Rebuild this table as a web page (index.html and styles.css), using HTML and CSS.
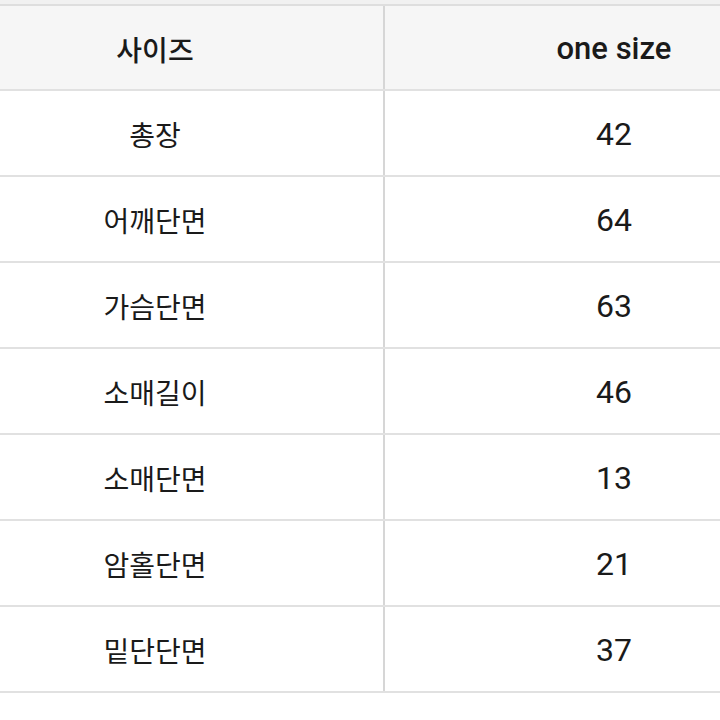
FILE: index.html
```html
<!DOCTYPE html>
<html lang="ko">
<head>
<meta charset="utf-8">
<link rel="stylesheet" href="styles.css">
</head>
<body>
<div class="page">
  <div class="strip"></div>
  <div class="table">
    <div class="row head"><div class="cell key">사이즈</div><div class="cell val">one size</div></div>
    <div class="row"><div class="cell key">총장</div><div class="cell val">42</div></div>
    <div class="row"><div class="cell key">어깨단면</div><div class="cell val">64</div></div>
    <div class="row"><div class="cell key">가슴단면</div><div class="cell val">63</div></div>
    <div class="row"><div class="cell key">소매길이</div><div class="cell val">46</div></div>
    <div class="row"><div class="cell key">소매단면</div><div class="cell val">13</div></div>
    <div class="row"><div class="cell key">암홀단면</div><div class="cell val">21</div></div>
    <div class="row"><div class="cell key">밑단단면</div><div class="cell val">37</div></div>
  </div>
</div>
</body>
</html>
```
FILE: styles.css
```css
html, body {
  margin: 0;
  padding: 0;
  background: #ffffff;
}
.page {
  width: 720px;
  height: 720px;
  overflow: hidden;
}
.strip {
  height: 4px;
  background: #f1f1f1;
}
.table {
  width: 916px;
  margin-left: -73px;
  border-top: 2px solid #dedede;
  font-family: Roboto, "Noto Sans CJK KR", sans-serif;
  color: #1a1a1a;
}
.row {
  display: grid;
  grid-template-columns: 456px 2px 458px;
  height: 86px;
  box-sizing: border-box;
  border-bottom: 2px solid #e1e1e1;
}
.row.head {
  height: 85px;
  background: #f6f6f6;
}
.cell {
  display: flex;
  align-items: center;
  justify-content: center;
}
.key {
  font-family: "Noto Sans CJK KR", sans-serif;
  font-size: 28px;
  font-weight: 400;
  padding-top: 2px;
}
.val {
  grid-column: 3;
  font-size: 32px;
  border-left: 2px solid #d6d6d6;
  margin-left: -2px;
  padding-top: 2px;
}
.row.head .key {
  font-weight: 500;
}
.row.head .val {
  font-weight: 500;
  font-size: 31px;
}
```
